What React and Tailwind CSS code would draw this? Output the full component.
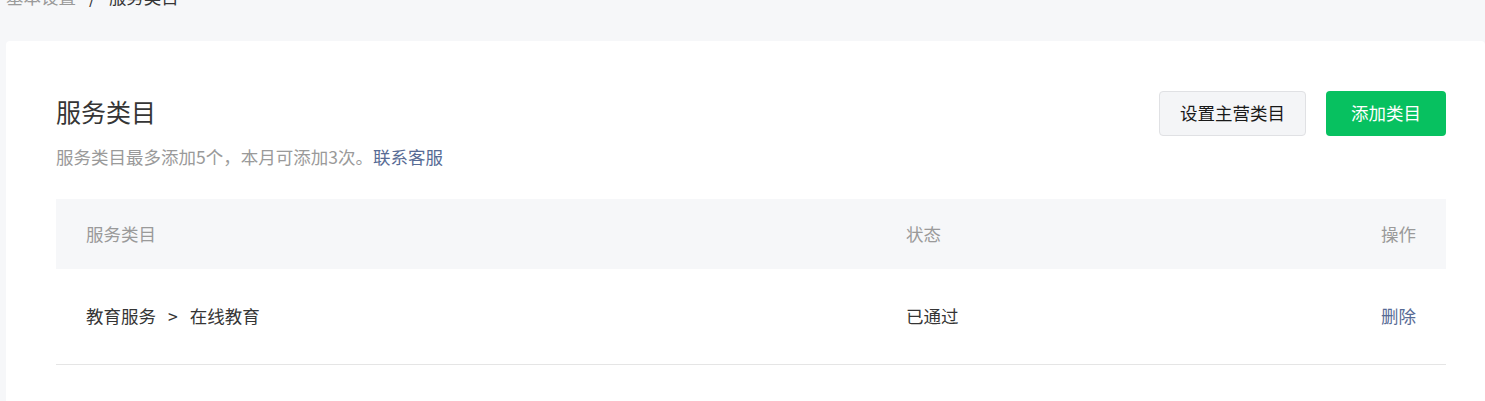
import React from 'react';

const rows = [
  { path: ['教育服务', '在线教育'], status: '已通过' },
];

const App = () => {
  return (
    <div
      className="min-h-[401px] w-full overflow-hidden bg-[#f6f7f9] text-[#353535]"
      style={{ fontFamily: '"Noto Sans CJK SC", "Noto Sans", sans-serif' }}
    >
      {/* 面包屑 */}
      <div className="-mt-[15px] flex h-[24px] items-center pl-[6px] text-[17.5px] leading-[24px]">
        <span className="text-[#9a9a9a]">基本设置</span>
        <span className="mx-[13px] text-[#353535]">/</span>
        <span className="text-[#353535]">服务类目</span>
      </div>

      <div className="ml-[6px] mt-[32px] min-h-[370px] rounded-[4px] bg-white pb-[40px] pl-[50px] pr-[39px] pt-[50px]">
        <div className="flex items-start justify-between">
          <div>
            <h2 className="text-[25px] font-normal leading-[40px] text-[#353535]">服务类目</h2>
            <p className="mt-[14px] text-[17.5px] leading-[24px] text-[#9a9a9a]">
              服务类目最多添加5个，本月可添加3次。
              <a href="#" className="text-[#576b95]">联系客服</a>
            </p>
          </div>
          <div className="flex gap-[20px]">
            <button className="h-[45px] w-[147px] rounded-[4px] border border-[#e0e1e4] bg-[#f4f5f7] text-[17.5px] text-[#191919]">
              设置主营类目
            </button>
            <button className="h-[45px] w-[120px] rounded-[4px] bg-[#07c160] text-[17.5px] text-white">
              添加类目
            </button>
          </div>
        </div>

        <table className="mt-[30px] w-full table-fixed border-collapse text-[17.5px]">
          <thead>
            <tr className="h-[70px] bg-[#f6f7f9] text-[#9a9a9a]">
              <th className="w-[850px] pl-[30px] text-left font-normal">服务类目</th>
              <th className="text-left font-normal">状态</th>
              <th className="w-[200px] pr-[30px] text-right font-normal">操作</th>
            </tr>
          </thead>
          <tbody>
            {rows.map((row, i) => (
              <tr key={i} className="h-[95px] border-b border-[#e5e5e5] text-[#353535]">
                <td className="pl-[30px]">
                  {row.path[0]}
                  <span className="mx-[12px]">&gt;</span>
                  {row.path[1]}
                </td>
                <td>{row.status}</td>
                <td className="pr-[30px] text-right">
                  <a href="#" className="text-[#576b95]">删除</a>
                </td>
              </tr>
            ))}
          </tbody>
        </table>
      </div>
    </div>
  );
};

export default App;
